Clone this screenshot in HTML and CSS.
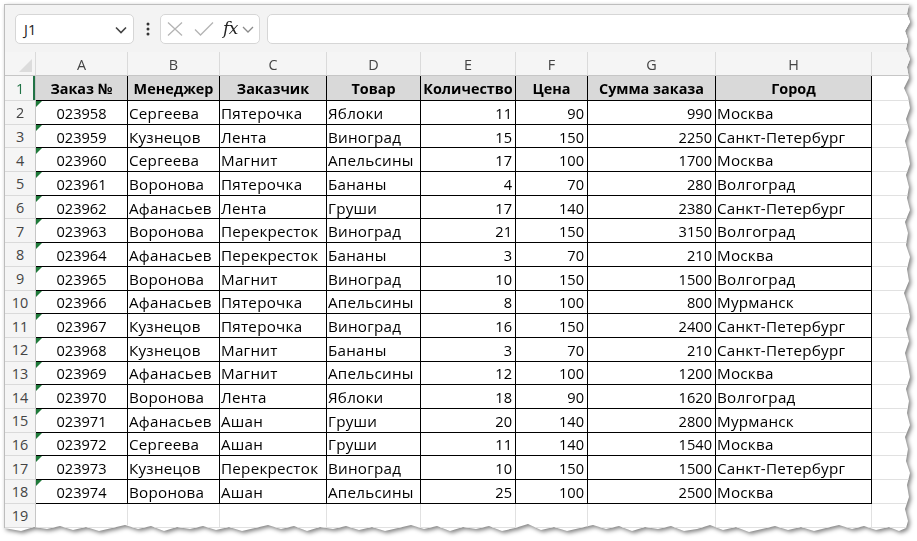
FILE: index.html
```html
<!DOCTYPE html>
<html lang="ru">
<head>
<meta charset="utf-8">
<title>Заказы</title>
<link rel="stylesheet" href="styles.css">
</head>
<body>
<div class="page">
  <div class="frame">
    <div class="toolbar">
      <div class="namebox">
        <span class="ref">J1</span>
        <svg class="chev" width="12" height="8" viewBox="0 0 12 8"><path d="M1 1.5 L6 6.5 L11 1.5" fill="none" stroke="#444" stroke-width="1.6"/></svg>
      </div>
      <svg class="dots" width="4" height="14" viewBox="0 0 4 14"><circle cx="2" cy="2" r="1.5" fill="#333"/><circle cx="2" cy="7" r="1.5" fill="#333"/><circle cx="2" cy="12" r="1.5" fill="#333"/></svg>
      <div class="fxbox">
        <svg class="ico-x" width="16" height="14" viewBox="0 0 16 14"><path d="M1 0.5 L15 13.5 M15 0.5 L1 13.5" stroke="#b4b4b4" stroke-width="1.3" fill="none"/></svg>
        <svg class="ico-ok" width="20" height="14" viewBox="0 0 20 14"><path d="M1 7.5 L6.5 13 L19 0.5" stroke="#b4b4b4" stroke-width="1.3" fill="none"/></svg>
        <span class="fx">fx</span>
        <svg class="chev-s" width="12" height="7" viewBox="0 0 12 7"><path d="M1 1 L6 6 L11 1" fill="none" stroke="#8a8a8a" stroke-width="1.3"/></svg>
      </div>
      <div class="formula"></div>
    </div>

    <div class="sheet">
      <div class="row colhead">
        <div class="c rn corner"><span class="tri"></span></div>
        <div class="c">A</div><div class="c">B</div><div class="c">C</div><div class="c">D</div><div class="c">E</div><div class="c">F</div><div class="c">G</div><div class="c">H</div><div class="c"></div>
      </div>
      <div class="row r1">
        <div class="c rn sel">1</div>
        <div class="c t h">Заказ №</div><div class="c t h">Менеджер</div><div class="c t h">Заказчик</div><div class="c t h">Товар</div><div class="c t h">Количество</div><div class="c t h">Цена</div><div class="c t h">Сумма заказа</div><div class="c t h">Город</div><div class="c"></div>
      </div>
      <div class="row d"><div class="c rn">2</div><div class="c t id">023958</div><div class="c t s">Сергеева</div><div class="c t s">Пятерочка</div><div class="c t s">Яблоки</div><div class="c t n">11</div><div class="c t n">90</div><div class="c t n">990</div><div class="c t s">Москва</div><div class="c"></div></div>
      <div class="row d"><div class="c rn">3</div><div class="c t id">023959</div><div class="c t s">Кузнецов</div><div class="c t s">Лента</div><div class="c t s">Виноград</div><div class="c t n">15</div><div class="c t n">150</div><div class="c t n">2250</div><div class="c t s">Санкт-Петербург</div><div class="c"></div></div>
      <div class="row d"><div class="c rn">4</div><div class="c t id">023960</div><div class="c t s">Сергеева</div><div class="c t s">Магнит</div><div class="c t s">Апельсины</div><div class="c t n">17</div><div class="c t n">100</div><div class="c t n">1700</div><div class="c t s">Москва</div><div class="c"></div></div>
      <div class="row d"><div class="c rn">5</div><div class="c t id">023961</div><div class="c t s">Воронова</div><div class="c t s">Пятерочка</div><div class="c t s">Бананы</div><div class="c t n">4</div><div class="c t n">70</div><div class="c t n">280</div><div class="c t s">Волгоград</div><div class="c"></div></div>
      <div class="row d"><div class="c rn">6</div><div class="c t id">023962</div><div class="c t s">Афанасьев</div><div class="c t s">Лента</div><div class="c t s">Груши</div><div class="c t n">17</div><div class="c t n">140</div><div class="c t n">2380</div><div class="c t s">Санкт-Петербург</div><div class="c"></div></div>
      <div class="row d"><div class="c rn">7</div><div class="c t id">023963</div><div class="c t s">Воронова</div><div class="c t s">Перекресток</div><div class="c t s">Виноград</div><div class="c t n">21</div><div class="c t n">150</div><div class="c t n">3150</div><div class="c t s">Волгоград</div><div class="c"></div></div>
      <div class="row d"><div class="c rn">8</div><div class="c t id">023964</div><div class="c t s">Афанасьев</div><div class="c t s">Перекресток</div><div class="c t s">Бананы</div><div class="c t n">3</div><div class="c t n">70</div><div class="c t n">210</div><div class="c t s">Москва</div><div class="c"></div></div>
      <div class="row d"><div class="c rn">9</div><div class="c t id">023965</div><div class="c t s">Воронова</div><div class="c t s">Магнит</div><div class="c t s">Виноград</div><div class="c t n">10</div><div class="c t n">150</div><div class="c t n">1500</div><div class="c t s">Волгоград</div><div class="c"></div></div>
      <div class="row d"><div class="c rn">10</div><div class="c t id">023966</div><div class="c t s">Афанасьев</div><div class="c t s">Пятерочка</div><div class="c t s">Апельсины</div><div class="c t n">8</div><div class="c t n">100</div><div class="c t n">800</div><div class="c t s">Мурманск</div><div class="c"></div></div>
      <div class="row d"><div class="c rn">11</div><div class="c t id">023967</div><div class="c t s">Кузнецов</div><div class="c t s">Пятерочка</div><div class="c t s">Виноград</div><div class="c t n">16</div><div class="c t n">150</div><div class="c t n">2400</div><div class="c t s">Санкт-Петербург</div><div class="c"></div></div>
      <div class="row d"><div class="c rn">12</div><div class="c t id">023968</div><div class="c t s">Кузнецов</div><div class="c t s">Магнит</div><div class="c t s">Бананы</div><div class="c t n">3</div><div class="c t n">70</div><div class="c t n">210</div><div class="c t s">Санкт-Петербург</div><div class="c"></div></div>
      <div class="row d"><div class="c rn">13</div><div class="c t id">023969</div><div class="c t s">Афанасьев</div><div class="c t s">Магнит</div><div class="c t s">Апельсины</div><div class="c t n">12</div><div class="c t n">100</div><div class="c t n">1200</div><div class="c t s">Москва</div><div class="c"></div></div>
      <div class="row d"><div class="c rn">14</div><div class="c t id">023970</div><div class="c t s">Воронова</div><div class="c t s">Лента</div><div class="c t s">Яблоки</div><div class="c t n">18</div><div class="c t n">90</div><div class="c t n">1620</div><div class="c t s">Волгоград</div><div class="c"></div></div>
      <div class="row d"><div class="c rn">15</div><div class="c t id">023971</div><div class="c t s">Афанасьев</div><div class="c t s">Ашан</div><div class="c t s">Груши</div><div class="c t n">20</div><div class="c t n">140</div><div class="c t n">2800</div><div class="c t s">Мурманск</div><div class="c"></div></div>
      <div class="row d"><div class="c rn">16</div><div class="c t id">023972</div><div class="c t s">Сергеева</div><div class="c t s">Ашан</div><div class="c t s">Груши</div><div class="c t n">11</div><div class="c t n">140</div><div class="c t n">1540</div><div class="c t s">Москва</div><div class="c"></div></div>
      <div class="row d"><div class="c rn">17</div><div class="c t id">023973</div><div class="c t s">Кузнецов</div><div class="c t s">Перекресток</div><div class="c t s">Виноград</div><div class="c t n">10</div><div class="c t n">150</div><div class="c t n">1500</div><div class="c t s">Санкт-Петербург</div><div class="c"></div></div>
      <div class="row d"><div class="c rn">18</div><div class="c t id">023974</div><div class="c t s">Воронова</div><div class="c t s">Ашан</div><div class="c t s">Апельсины</div><div class="c t n">25</div><div class="c t n">100</div><div class="c t n">2500</div><div class="c t s">Москва</div><div class="c"></div></div>
      <div class="row e"><div class="c rn">19</div><div class="c"></div><div class="c"></div><div class="c"></div><div class="c"></div><div class="c"></div><div class="c"></div><div class="c"></div><div class="c"></div><div class="c"></div></div>
    </div>
  </div>
</div>
</body>
</html>
```

FILE: styles.css
```css
* { box-sizing: border-box; }
html, body { margin: 0; padding: 0; background: #fff; }
body { font-family: "Open Sans", "Noto Sans", sans-serif; color: #000; }

.page {
  width: 917px;
  height: 541px;
  padding: 4px 0 0 4px;
  filter: drop-shadow(2px 2px 2px rgba(0,0,0,0.5));
  overflow: hidden;
}

.frame {
  width: 908px;
  height: 533px;
  background: #fff;
  border-left: 1px solid #bdbdbd;
  border-top: 1px solid #bdbdbd;
  overflow: hidden;
  clip-path: polygon(0 0, 905px 0, 903px 10px, 906px 18px, 901px 27px, 904px 36px, 902px 45px, 906px 55px, 903px 63px, 905px 74px, 900px 84px, 904px 93px, 906px 104px, 902px 115px, 905px 126px, 901px 137px, 904px 148px, 906px 160px, 902px 171px, 905px 183px, 903px 194px, 906px 206px, 901px 218px, 904px 229px, 902px 241px, 906px 253px, 903px 265px, 905px 277px, 900px 289px, 904px 301px, 906px 313px, 902px 325px, 905px 337px, 901px 349px, 904px 361px, 906px 373px, 902px 385px, 905px 397px, 903px 409px, 906px 421px, 901px 433px, 904px 445px, 902px 457px, 906px 469px, 903px 481px, 905px 493px, 901px 505px, 904px 517px, 902px 524px, 895px 527px, 885px 523px, 872px 526px, 860px 522px, 848px 525px, 835px 521px, 822px 524px, 810px 527px, 797px 523px, 784px 526px, 771px 522px, 758px 525px, 745px 528px, 732px 523px, 719px 526px, 706px 521px, 693px 525px, 680px 527px, 667px 522px, 654px 525px, 641px 523px, 628px 527px, 615px 522px, 602px 525px, 589px 521px, 576px 524px, 563px 527px, 550px 523px, 537px 526px, 524px 520px, 511px 524px, 498px 527px, 485px 522px, 472px 525px, 459px 523px, 446px 527px, 433px 522px, 420px 525px, 407px 521px, 394px 524px, 381px 527px, 368px 523px, 355px 526px, 342px 522px, 329px 525px, 316px 523px, 303px 527px, 290px 522px, 277px 525px, 264px 521px, 251px 524px, 238px 527px, 225px 523px, 212px 526px, 199px 522px, 186px 525px, 173px 523px, 160px 527px, 147px 522px, 134px 525px, 121px 521px, 108px 524px, 95px 527px, 82px 523px, 69px 526px, 56px 522px, 43px 525px, 30px 523px, 17px 527px, 0 524px);
}

/* ---------- toolbar ---------- */
.toolbar {
  height: 47px;
  background: #f3f3f3;
  display: flex;
  align-items: flex-start;
  padding: 9px 0 0 10px;
}
.namebox {
  width: 119px;
  height: 30px;
  background: #fff;
  border: 1px solid #d6d6d6;
  border-radius: 5px;
  display: flex;
  align-items: center;
  justify-content: space-between;
  padding: 0 6px 0 8px;
}
.ref { font-size: 14.5px; color: #222; }
.chev { margin-top: 1px; }
.dots { margin: 8px 0 0 12px; }
.fxbox {
  margin-left: 10px;
  width: 100px;
  height: 30px;
  background: #fff;
  border: 1px solid #d6d6d6;
  border-radius: 5px;
  display: flex;
  align-items: center;
  padding-left: 6px;
}
.ico-ok { margin-left: 11px; }
.fx {
  margin-left: 9px;
  font-family: "DejaVu Serif", "Liberation Serif", serif;
  font-style: italic;
  font-size: 17px;
  color: #222;
  letter-spacing: -0.5px;
  line-height: 1;
  margin-top: -2px;
}
.chev-s { margin-left: 4px; }
.formula {
  margin-left: 7px;
  flex: 1;
  height: 30px;
  background: #fff;
  border: 1px solid #d6d6d6;
  border-radius: 5px;
}

/* ---------- sheet ---------- */
.row {
  display: grid;
  grid-template-columns: 31px 92px 92px 107px 94px 95px 72px 128px 156px 1fr;
}
.c {
  border-right: 1px solid #e1e1e1;
  border-bottom: 1px solid #e1e1e1;
  font-size: 14.4px;
  white-space: nowrap;
  overflow: hidden;
  display: flex;
  align-items: center;
  padding: 1px 2px 0 2px;
  position: relative;
}
.colhead { height: 24px; background: #f5f5f5; }
.colhead .c {
  justify-content: center;
  color: #444;
  border-right-color: #dadada;
  border-bottom-color: #c6c6c6;
}
.r1 { height: 25px; }
.d { height: 23.69px; }
.e { height: 24px; }

.rn {
  background: #f5f5f5;
  color: #444;
  justify-content: center;
  border-right-color: #c6c6c6;
  border-bottom-color: #dadada;
  padding: 1px 0 0 0;
}
.rn.sel { color: #217346; box-shadow: inset -2px 0 0 #217346; }

.corner .tri {
  position: absolute;
  right: 3px;
  bottom: 3px;
  width: 0;
  height: 0;
  border-left: 13px solid transparent;
  border-bottom: 13px solid #dcdcdc;
}

.t { border-right-color: #000; border-bottom-color: #000; }
.s { font-size: 15.2px; letter-spacing: 0.25px; padding-left: 1px; }
.h { background: #d9d9d9; font-weight: 700; justify-content: center; }
.n { justify-content: flex-end; padding-right: 3px; font-size: 14.6px; }
.id { justify-content: center; font-size: 14.6px; }
.id::before {
  content: "";
  position: absolute;
  left: 0;
  top: 0;
  width: 0;
  height: 0;
  border-top: 6px solid #1f7a3a;
  border-right: 6px solid transparent;
}
```
